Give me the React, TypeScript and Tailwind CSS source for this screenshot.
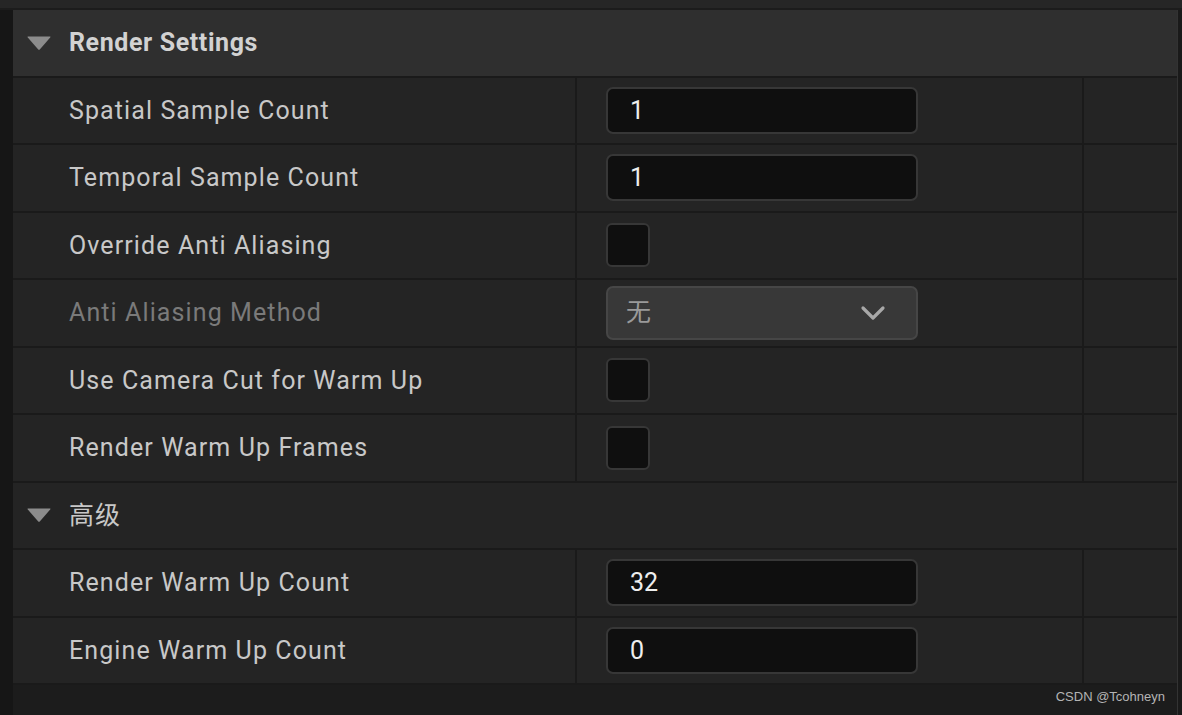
import React from "react";

type Row =
  | { kind: "header"; label: string; bold?: boolean }
  | { kind: "input"; label: string; value: string }
  | { kind: "check"; label: string }
  | { kind: "select"; label: string; value: string };

const rows: Row[] = [
  { kind: "input", label: "Spatial Sample Count", value: "1" },
  { kind: "input", label: "Temporal Sample Count", value: "1" },
  { kind: "check", label: "Override Anti Aliasing" },
  { kind: "select", label: "Anti Aliasing Method", value: "无" },
  { kind: "check", label: "Use Camera Cut for Warm Up" },
  { kind: "check", label: "Render Warm Up Frames" },
  { kind: "header", label: "高级" },
  { kind: "input", label: "Render Warm Up Count", value: "32" },
  { kind: "input", label: "Engine Warm Up Count", value: "0" },
];

const font = {
  fontFamily: "Roboto, 'Noto Sans CJK SC', sans-serif",
};

function Caret() {
  return (
    <svg width="26" height="16" viewBox="0 0 26 16" className="shrink-0">
      <path
        d="M2 1.5 H24 Q25 1.5 24.2 2.6 L14 14.2 Q13 15.2 12 14.2 L1.8 2.6 Q1 1.5 2 1.5 Z"
        fill="#8c8c8c"
      />
    </svg>
  );
}

function HeaderRow({ label, bold }: { label: string; bold?: boolean }) {
  return (
    <div
      className={
        "flex items-center h-[67.5px] border-b-2 border-[#1a1a1a] pl-[13px] gap-[17px] " +
        (bold ? "bg-[#2f2f2f]" : "bg-[#242424]")
      }
    >
      <Caret />
      <span
        className={
          "text-[25px] " +
          (bold
            ? "font-bold text-[#d2d2d2] tracking-[0.6px]"
            : "text-[#c8c8c8] tracking-[1px]")
        }
      >
        {label}
      </span>
    </div>
  );
}

function ValueCell({ row }: { row: Row }) {
  if (row.kind === "input") {
    return (
      <div className="w-[312px] h-[47px] rounded-[7px] bg-[#0f0f0f] border-2 border-[#373737] flex items-center pl-[22px] text-[25px] text-[#eeeeee]">
        {row.value}
      </div>
    );
  }
  if (row.kind === "check") {
    return (
      <div className="w-[44px] h-[44px] rounded-[6px] bg-[#0f0f0f] border-2 border-[#373737]" />
    );
  }
  if (row.kind === "select") {
    return (
      <div className="w-[312px] h-[54px] rounded-[7px] bg-[#383838] border-2 border-[#464646] flex items-center justify-between pl-[18px] pr-[30px] text-[25px] text-[#9a9a9a]">
        <span>{row.value}</span>
        <svg width="26" height="16" viewBox="0 0 26 16">
          <path
            d="M3 3 L13 13 L23 3"
            fill="none"
            stroke="#a8a8a8"
            strokeWidth="3.2"
            strokeLinecap="round"
            strokeLinejoin="round"
          />
        </svg>
      </div>
    );
  }
  return null;
}

function PropertyRow({ row }: { row: Row }) {
  const disabled = row.kind === "select";
  return (
    <div className="flex h-[67.5px] border-b-2 border-[#1a1a1a] bg-[#242424]">
      <div
        className={
          "w-[564px] flex items-center pl-[56px] text-[25px] tracking-[1.1px] border-r-2 border-[#1a1a1a] " +
          (disabled ? "text-[#7a7a7a]" : "text-[#c8c8c8]")
        }
      >
        {row.label}
      </div>
      <div className="w-[507px] flex items-center pl-[29px] border-r-2 border-[#1a1a1a]">
        <ValueCell row={row} />
      </div>
      <div className="flex-1" />
    </div>
  );
}

export default function App() {
  return (
    <div
      className="w-[1182px] h-[715px] bg-[#1c1c1c] flex flex-col overflow-hidden"
      style={font}
    >
      <div className="h-[8px] bg-[#262626] shrink-0" />
      <div className="h-[2px] bg-[#1c1c1c] shrink-0" />
      <div className="flex flex-1 min-h-0">
        <div className="w-[13px] bg-[#161616] shrink-0" />
        <div className="flex-1 flex flex-col">
          <HeaderRow label="Render Settings" bold />
          {rows.map((row, i) =>
            row.kind === "header" ? (
              <HeaderRow key={i} label={row.label} />
            ) : (
              <PropertyRow key={i} row={row} />
            )
          )}
          <div className="flex-1 flex items-end justify-end pr-[12px] pb-[9px]">
            <span
              className="text-[13px] text-[#b4b4b4]"
              style={{ fontFamily: "'Liberation Sans', Arial, sans-serif" }}
            >
              CSDN @Tcohneyn
            </span>
          </div>
        </div>
        <div className="w-[1px] bg-[#333333] shrink-0" />
        <div className="w-[4px] bg-[#1a1a1a] shrink-0" />
      </div>
    </div>
  );
}
